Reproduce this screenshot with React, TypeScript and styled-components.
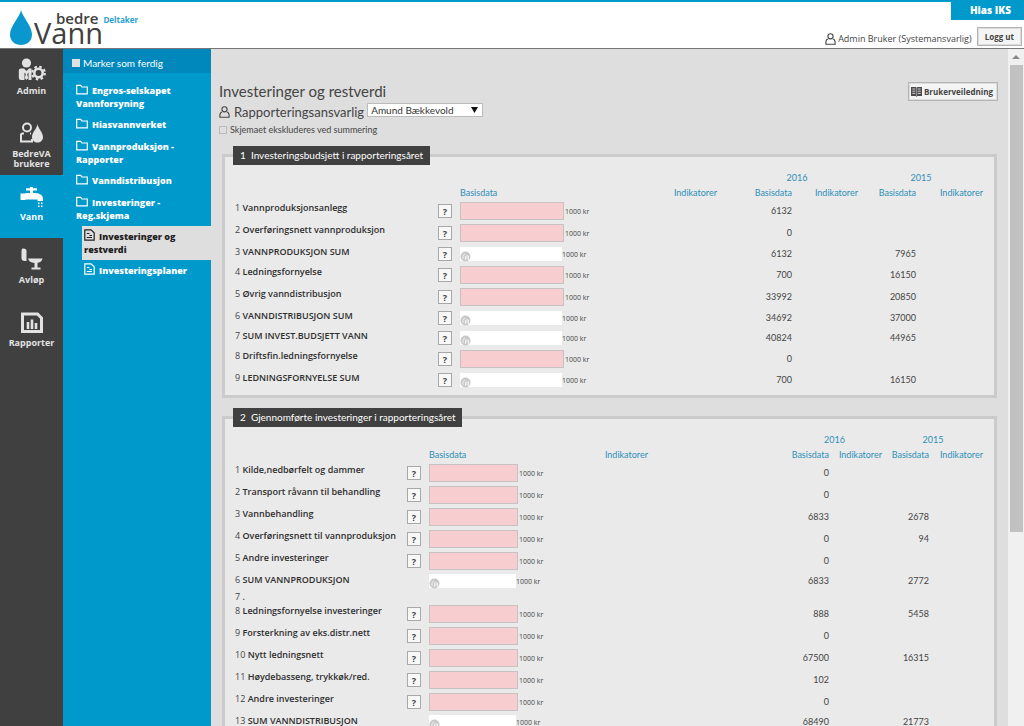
import React from "react";
import styled, { createGlobalStyle, css } from "styled-components";

const blue = "#0099cc";
const dark = "#404040";
const light = `Lato, "Open Sans", sans-serif`;

const GlobalStyle = createGlobalStyle`
  * { box-sizing: border-box; }
  body {
    margin: 0;
    font-family: "Open Sans", "Noto Sans", sans-serif;
    font-size: 9px;
    color: #444;
    background: #dedede;
  }
  button, input, select { font-family: inherit; color: inherit; margin: 0; }
`;

const Page = styled.div`
  display: flex;
  flex-direction: column;
  height: 100vh;
`;

const Header = styled.header`
  flex: none;
  display: flex;
  justify-content: space-between;
  height: 49px;
  background: #fff;
  border-top: 2px solid ${blue};
  border-bottom: 1px solid #777;
`;

const Brand = styled.a`
  display: flex;
  align-items: flex-start;
  padding: 7px 0 0 9px;
  color: ${dark};
  text-decoration: none;
`;

const Wordmark = styled.span`
  display: flex;
  flex-direction: column;
  margin-left: 1px;
`;

const WordTop = styled.span`
  display: flex;
  align-items: center;
  gap: 5px;
  padding-left: 22px;
  font-size: 15px;
  font-weight: 600;
  line-height: 16px;
`;

const WordBottom = styled.span`
  margin-top: -4px;
  font-size: 29px;
  line-height: 21px;
`;

const Role = styled.span`
  font-size: 8px;
  font-weight: 700;
  line-height: 12px;
  padding-top: 5px;
  color: #2a9fd0;
`;

const Account = styled.div`
  display: flex;
  flex-direction: column;
  align-items: flex-end;
`;

const Company = styled.div`
  margin-top: -2px;
  padding: 0 13px 0 19px;
  font-size: 10px;
  font-weight: 800;
  line-height: 20px;
  color: #fff;
  background: ${blue};
`;

const UserRow = styled.div`
  display: flex;
  align-items: center;
  padding: 7px 2px 0 0;
  font-size: 9px;
  line-height: 12px;
`;

const UserName = styled.span`
  display: flex;
  align-items: center;
  gap: 2px;
  padding-top: 4px;
`;

const PlainButton = styled.button`
  display: flex;
  align-items: center;
  justify-content: center;
  gap: 2px;
  height: 19px;
  padding: 0 4px 0 2px;
  font-size: 8px;
  font-weight: 700;
  line-height: 16px;
  background: #f4f4f4;
  border: 1px solid #b4b4b4;
  box-shadow: inset 0 0 0 1px #dcdcdc;
`;

const LogoutButton = styled(PlainButton)`
  margin-left: 5px;
  padding: 0 7px;
`;

const Body = styled.div`
  flex: 1;
  display: flex;
  min-height: 0;
`;

const MainNav = styled.nav`
  flex: none;
  width: 63px;
  background: ${dark};
`;

const NavItem = styled.a<{ $active?: boolean }>`
  display: flex;
  flex-direction: column;
  align-items: center;
  height: 63px;
  padding-top: 9px;
  font-size: 9px;
  font-weight: 700;
  line-height: 10px;
  text-align: center;
  text-decoration: none;
  color: ${(p) => (p.$active ? "#fff" : "#e2e2e2")};
  background: ${(p) => (p.$active ? blue : "transparent")};
  svg { display: block; margin-bottom: 4px; }
`;

const SubNav = styled.nav`
  flex: none;
  width: 148px;
  background: ${blue};
  color: #fff;
`;

const MarkDone = styled.label`
  display: flex;
  align-items: center;
  gap: 3px;
  height: 24px;
  padding: 4px 0 0 9px;
  font-family: ${light};
  font-size: 10px;
  line-height: 14px;
  background: #0088bd;
`;

const Tick = styled.input<{ $filled?: boolean }>`
  appearance: none;
  width: 8px;
  height: 8px;
  background: ${(p) => (p.$filled ? "#e0e0e0" : "transparent")};
  border: 1px solid ${(p) => (p.$filled ? "#e0e0e0" : "#bbb")};
`;

const FolderList = styled.ul`
  display: flex;
  flex-direction: column;
  gap: 8px;
  margin: 0;
  padding: 11px 0 0 13px;
  list-style: none;
`;

const FolderItem = styled.li`
  min-height: 14px;
`;

const menuText = css`
  display: block;
  font-size: 9px;
  font-weight: 800;
  line-height: 13px;
  text-decoration: none;
  svg { margin-right: 4px; vertical-align: -1px; }
`;

const FolderLink = styled.a`
  ${menuText}
  color: #fff;
`;

const FormList = styled.ul`
  display: flex;
  flex-direction: column;
  margin: 4px 0 0 6px;
  padding: 0;
  list-style: none;
`;

const FormLink = styled.a<{ $active?: boolean }>`
  ${menuText}
  padding: 3px 3px 4px 2px;
  color: ${(p) => (p.$active ? "#222" : "#fff")};
  background: ${(p) => (p.$active ? "#dedede" : "transparent")};
`;

const Content = styled.main`
  flex: 1;
  min-width: 0;
  padding: 33px 10px 0 8px;
  overflow: auto;
  scrollbar-width: none;
`;

const TitleRow = styled.div`
  display: flex;
  justify-content: space-between;
  height: 21px;
`;

const Title = styled.h1`
  margin: 0;
  font-family: ${light};
  font-size: 15px;
  font-weight: 400;
  line-height: 18px;
`;

const Responsible = styled.div`
  display: flex;
  align-items: flex-start;
  height: 20px;
  font-family: ${light};
  font-size: 13px;
  line-height: 18px;
  label { display: flex; align-items: center; gap: 4px; }
`;

const SelectWrap = styled.span`
  position: relative;
  display: block;
  margin-left: 3px;
`;

const Select = styled.select`
  display: block;
  appearance: none;
  width: 116px;
  height: 14px;
  padding: 0 16px 0 3px;
  font-size: 10px;
  line-height: 12px;
  color: #333;
  background: #fff;
  border: 1px solid #bbb;
  border-radius: 0;
`;

const SelectArrow = styled.svg`
  position: absolute;
  top: 4px;
  right: 5px;
  pointer-events: none;
`;

const Exclude = styled.label`
  display: flex;
  align-items: center;
  gap: 3px;
  height: 14px;
  margin-bottom: 9px;
  font-family: ${light};
  font-size: 9px;
  line-height: 14px;
`;

const Panel = styled.fieldset`
  min-width: 0;
  margin: 0 1px 10px 3px;
  padding: 5px 10px 5px;
  background: #eaeaea;
  border: 3px solid #cbcbcb;
`;

const PanelTitle = styled.legend`
  height: 19px;
  margin-left: -2px;
  padding: 0 7px;
  font-family: ${light};
  font-size: 10px;
  line-height: 19px;
  white-space: pre;
  color: #fff;
  background: ${dark};
`;

const Grid = styled.table`
  width: 100%;
  table-layout: fixed;
  border-collapse: collapse;
  td, th { padding: 0; }
`;

const HeadCell = styled.th<{ $align?: string; $inset?: number }>`
  height: 15px;
  font-family: ${light};
  font-size: 9px;
  font-weight: 400;
  line-height: 15px;
  color: #2f8fb8;
  text-align: ${(p) => p.$align ?? "right"};
  && { padding-right: ${(p) => p.$inset ?? 0}px; }
`;

const Row = styled.tr<{ $height: number }>`
  height: ${(p) => p.$height}px;
`;

const NameCell = styled.th<{ $line: number }>`
  font-size: 9px;
  font-weight: 400;
  line-height: ${(p) => p.$line}px;
  text-align: left;
  vertical-align: top;
  white-space: nowrap;
`;

const NameLabel = styled.label`
  font-weight: 600;
  color: #2e2e2e;
`;

const ValueCell = styled.td`
  font-family: ${light};
  font-size: 9px;
  line-height: 12px;
  text-align: right;
`;

const Field = styled.div`
  display: flex;
  align-items: center;
  gap: 1px;
  font-size: 7px;
  line-height: 12px;
  white-space: nowrap;
`;

const ReadField = styled(Field)`
  position: relative;
  gap: 0;
`;

const Unit = styled.span`
  padding-top: 1px;
`;

const AmountInput = styled.input<{ $width: number }>`
  flex: none;
  width: ${(p) => p.$width}px;
  height: 18px;
  padding: 0 3px;
  font-size: 9px;
  background: #f8cdd0;
  border: 1px solid #c6c2c3;
`;

const SumInput = styled.input<{ $width: number }>`
  flex: none;
  width: ${(p) => p.$width}px;
  height: 14px;
  padding: 0 3px 0 14px;
  font-size: 9px;
  background: #fff;
  border: 0;
`;

const SumMark = styled.svg`
  position: absolute;
  left: 0;
  bottom: -1px;
`;

const HelpButton = styled.button`
  display: block;
  width: 14px;
  height: 14px;
  padding: 0;
  font-size: 9px;
  font-weight: 700;
  line-height: 11px;
  text-align: center;
  background: #f8f8f8;
  border: 1px solid #a8a8a8;
`;

const ScrollTrack = styled.div`
  flex: none;
  display: flex;
  flex-direction: column;
  align-items: center;
  width: 16px;
  background: #f0f0f0;
`;

const ScrollUp = styled.div`
  display: flex;
  align-items: center;
  justify-content: center;
  height: 16px;
`;

const ScrollThumb = styled.div`
  width: 13px;
  height: 69%;
  background: #c1c1c1;
`;

const DropLogo = () => (
  <svg width="24" height="37" viewBox="0 0 24 37" aria-hidden="true">
    <path d="M12 1C11 8 1 17 1 25.500C1 32 6 36 12 36C18 36 23 32 23 25.500C23 17 13.500 8 12 1Z" fill="#0a97cd" />
  </svg>
);

const PersonIcon = () => (
  <svg width="11" height="12" viewBox="0 0 11 12" fill="none" stroke="currentColor" strokeWidth="1.100" aria-hidden="true">
    <circle cx="5.500" cy="3.300" r="2.600" />
    <path d="M3.200 6.300H2L.9 8.500V11.200H10.100V8.500L9 6.300H7.800" />
  </svg>
);

const BookIcon = () => (
  <svg width="11" height="11" viewBox="0 0 11 11" aria-hidden="true">
    <path d="M0 1H4.500L5.500 1.700L6.500 1H11V10H6.500L5.500 10.700L4.500 10H0Z" fill="#4a4a4a" />
    <path d="M1.300 3H4.300M1.300 5.200H4.300M1.300 7.400H4.300M6.700 3H9.700M6.700 5.200H9.700M6.700 7.400H9.700" stroke="#ddd" strokeWidth=".9" />
    <path d="M5.500 2V10" stroke="#bbb" strokeWidth=".6" />
  </svg>
);

const FolderIcon = () => (
  <svg width="12" height="11" viewBox="0 0 12 11" fill="none" stroke="currentColor" strokeWidth="1.200" aria-hidden="true">
    <path d="M.7 9.800V1.300H4.700L6 3H11.300V9.800Z" />
  </svg>
);

const FormIcon = () => (
  <svg width="11" height="12" viewBox="0 0 11 12" fill="none" stroke="currentColor" strokeWidth="1.200" aria-hidden="true">
    <path d="M.8 .8H7L10.200 3.800V11.200H.8ZM2.800 4.500H5.500M2.800 8.500H8M5.500 6.500H8" />
  </svg>
);

const AdminIcon = () => (
  <svg width="28" height="24" viewBox="0 0 28 24" aria-hidden="true">
    <circle cx="8.500" cy="5" r="4.600" fill="currentColor" />
    <path d="M3 10.500H6L8.500 13L11 10.500H13.500V22H10.500V14.500L8.500 17L6.500 14.500V22H3Q.8 22 .8 19.800V12.700Q.8 10.500 3 10.500Z" fill="currentColor" />
    <path d="M8.500 14L10.300 20L8.500 22L6.700 20Z" fill="currentColor" />
    <circle cx="20.500" cy="15" r="4.200" fill="none" stroke="currentColor" strokeWidth="2.600" />
    <circle cx="20.500" cy="15" r="6.300" fill="none" stroke="currentColor" strokeWidth="2.200" strokeDasharray="2.500 2.448" />
  </svg>
);

const UsersIcon = () => (
  <svg width="26" height="24" viewBox="0 0 26 24" aria-hidden="true">
    <g fill="none" stroke="currentColor" strokeWidth="2">
      <circle cx="8" cy="6.500" r="4" />
      <path d="M5 12.500H3.500Q2 12.500 2 14V20.500H13V18" />
      <path d="M11 12.500H12" />
    </g>
    <path d="M18.500 3C18 7.500 13 11.500 13 16C13 19.500 15.500 21.500 18.500 21.500C21.500 21.500 24 19.500 24 16C24 11.500 19.200 7.500 18.500 3Z" fill="currentColor" />
  </svg>
);

const TapIcon = () => (
  <svg width="26" height="24" viewBox="0 0 26 24" fill="currentColor" aria-hidden="true">
    <path d="M7 4.200H11V3H14V4.200H18V6.500H14V9H15Q23.500 9 24 14.500V17H18.500V15.500H6.500V16H1.500V9.500H6.500V9H11V6.500H7Z" />
    <path d="M19 18.500H20.500V20H19ZM22 18.500H23.500V20H22ZM19 21.500H20.500V23H19ZM22 21.500H23.500V23H22Z" />
  </svg>
);

const ToiletIcon = () => (
  <svg width="24" height="24" viewBox="0 0 24 24" fill="currentColor" aria-hidden="true">
    <path d="M2.500 1.500Q6.500 1 6.500 4V14H4.500Q1.500 14 1.500 11V4Q1.500 2 2.500 1.500Z" />
    <path d="M8 11.500H22.500Q22 15 17.500 16V20.500H20.500V22.500H11.500V20.500H14.500V16Q9 15.500 8 11.500Z" />
  </svg>
);

const ReportIcon = () => (
  <svg width="24" height="24" viewBox="0 0 24 24" fill="none" stroke="currentColor" aria-hidden="true">
    <path d="M2.500 4H17.500L21.500 8V21.500H2.500Z" strokeWidth="3" />
    <path d="M8 12V19M12 9.500V19M16 13V19" strokeWidth="2.600" />
  </svg>
);

const SigmaMark = () => (
  <SumMark width="11" height="11" viewBox="0 0 11 11" aria-hidden="true">
    <circle cx="5.500" cy="5.500" r="5" fill="#c9c9c9" />
    <path d="M3 8V4.500L5 3M5.500 9V5H8.500V9M5.500 7H8.500" fill="none" stroke="#efefef" />
  </SumMark>
);

type Line = {
  name: string;
  kind: "input" | "sum" | "blank";
  help?: boolean;
  a?: number;
  b?: number;
};

const budget: Line[] = [
  { name: "Vannproduksjonsanlegg", kind: "input", help: true, a: 6132 },
  { name: "Overføringsnett vannproduksjon", kind: "input", help: true, a: 0 },
  { name: "VANNPRODUKSJON SUM", kind: "sum", help: true, a: 6132, b: 7965 },
  { name: "Ledningsfornyelse", kind: "input", help: true, a: 700, b: 16150 },
  { name: "Øvrig vanndistribusjon", kind: "input", help: true, a: 33992, b: 20850 },
  { name: "VANNDISTRIBUSJON SUM", kind: "sum", help: true, a: 34692, b: 37000 },
  { name: "SUM INVEST.BUDSJETT VANN", kind: "sum", help: true, a: 40824, b: 44965 },
  { name: "Driftsfin.ledningsfornyelse", kind: "input", help: true, a: 0 },
  { name: "LEDNINGSFORNYELSE SUM", kind: "sum", help: true, a: 700, b: 16150 },
];

const completed: Line[] = [
  { name: "Kilde,nedbørfelt og dammer", kind: "input", help: true, a: 0 },
  { name: "Transport råvann til behandling", kind: "input", help: true, a: 0 },
  { name: "Vannbehandling", kind: "input", help: true, a: 6833, b: 2678 },
  { name: "Overføringsnett til vannproduksjon", kind: "input", help: true, a: 0, b: 94 },
  { name: "Andre investeringer", kind: "input", help: true, a: 0 },
  { name: "SUM VANNPRODUKSJON", kind: "sum", a: 6833, b: 2772 },
  { name: ".", kind: "blank" },
  { name: "Ledningsfornyelse investeringer", kind: "input", help: true, a: 888, b: 5458 },
  { name: "Forsterkning av eks.distr.nett", kind: "input", help: true, a: 0 },
  { name: "Nytt ledningsnett", kind: "input", help: true, a: 67500, b: 16315 },
  { name: "Høydebasseng, trykkøk/red.", kind: "input", help: true, a: 102 },
  { name: "Andre investeringer", kind: "input", help: true, a: 0 },
  { name: "SUM VANNDISTRIBUSJON", kind: "sum", a: 68490, b: 21773 },
];

const rowHeight = (l: Line) =>
  l.kind === "input" ? 22 : l.kind === "blank" ? 13 : l.help ? 20 : 18;

type SectionProps = {
  id: string;
  title: string;
  lines: Line[];
  columns: (number | undefined)[];
  inset: number;
  fieldWidth: number;
};

const Section = ({ id, title, lines, columns, inset, fieldWidth }: SectionProps) => (
  <Panel>
    <PanelTitle>{title}</PanelTitle>
    <Grid>
      <colgroup>
        {columns.map((w, i) => (
          <col key={i} width={w} />
        ))}
      </colgroup>
      <thead>
        <tr>
          <td colSpan={4} />
          <HeadCell colSpan={2} $align="center">2016</HeadCell>
          <HeadCell colSpan={2} $align="center">2015</HeadCell>
        </tr>
        <tr>
          <td colSpan={2} />
          <HeadCell $align="left">Basisdata</HeadCell>
          <HeadCell $inset={inset}>Indikatorer</HeadCell>
          <HeadCell>Basisdata</HeadCell>
          <HeadCell>Indikatorer</HeadCell>
          <HeadCell>Basisdata</HeadCell>
          <HeadCell $inset={1}>Indikatorer</HeadCell>
        </tr>
      </thead>
      <tbody>
        {lines.map((l, i) => {
          const fieldId = `${id}-${i + 1}`;
          return (
            <Row key={fieldId} $height={rowHeight(l)}>
              <NameCell scope="row" $line={l.kind === "blank" ? 13 : 16}>
                {i + 1} <NameLabel htmlFor={fieldId}>{l.name}</NameLabel>
              </NameCell>
              <td>{l.help && <HelpButton type="button">?</HelpButton>}</td>
              <td>
                {l.kind === "input" && (
                  <Field>
                    <AmountInput id={fieldId} type="text" $width={fieldWidth} />
                    <Unit>1000 kr</Unit>
                  </Field>
                )}
                {l.kind === "sum" && (
                  <ReadField>
                    <SumInput id={fieldId} type="text" readOnly $width={fieldWidth - 2} />
                    <SigmaMark />
                    <Unit>1000 kr</Unit>
                  </ReadField>
                )}
              </td>
              <td />
              <ValueCell>{l.a}</ValueCell>
              <td />
              <ValueCell>{l.b}</ValueCell>
              <td />
            </Row>
          );
        })}
      </tbody>
    </Grid>
  </Panel>
);

const folders = [
  "Engros-selskapet Vannforsyning",
  "Hiasvannverket",
  "Vannproduksjon - Rapporter",
  "Vanndistribusjon",
];

export default function App() {
  return (
    <Page>
      <GlobalStyle />
      <Header>
        <Brand href="#">
          <DropLogo />
          <Wordmark>
            <WordTop>
              bedre <Role>Deltaker</Role>
            </WordTop>
            <WordBottom>Vann</WordBottom>
          </Wordmark>
        </Brand>
        <Account>
          <Company>Hias IKS</Company>
          <UserRow>
            <UserName><PersonIcon />Admin Bruker (Systemansvarlig)</UserName>
            <LogoutButton type="button">Logg ut</LogoutButton>
          </UserRow>
        </Account>
      </Header>
      <Body>
        <MainNav>
          <NavItem href="#"><AdminIcon />Admin</NavItem>
          <NavItem href="#"><UsersIcon />BedreVA<br />brukere</NavItem>
          <NavItem href="#" $active><TapIcon />Vann</NavItem>
          <NavItem href="#"><ToiletIcon />Avløp</NavItem>
          <NavItem href="#"><ReportIcon />Rapporter</NavItem>
        </MainNav>
        <SubNav>
          <MarkDone>
            <Tick type="checkbox" $filled />
            Marker som ferdig
          </MarkDone>
          <FolderList>
            {folders.map((f) => (
              <FolderItem key={f}>
                <FolderLink href="#"><FolderIcon />{f}</FolderLink>
              </FolderItem>
            ))}
            <FolderItem>
              <FolderLink href="#"><FolderIcon />Investeringer -<br />Reg.skjema</FolderLink>
              <FormList>
                <li><FormLink href="#" $active><FormIcon />Investeringer og<br />restverdi</FormLink></li>
                <li><FormLink href="#"><FormIcon />Investeringsplaner</FormLink></li>
              </FormList>
            </FolderItem>
          </FolderList>
        </SubNav>
        <Content>
          <TitleRow>
            <Title>Investeringer og restverdi</Title>
            <PlainButton type="button"><BookIcon />Brukerveiledning</PlainButton>
          </TitleRow>
          <Responsible>
            <label htmlFor="responsible"><PersonIcon />Rapporteringsansvarlig</label>
            <SelectWrap>
              <Select id="responsible">
                <option>Amund Bækkevold</option>
              </Select>
              <SelectArrow width="7" height="6" viewBox="0 0 7 6" aria-hidden="true">
                <path d="M0 0H7L3.500 6Z" fill="#111" />
              </SelectArrow>
            </SelectWrap>
          </Responsible>
          <Exclude>
            <Tick type="checkbox" />
            Skjemaet ekskluderes ved summering
          </Exclude>
          <Section
            id="budget"
            title="1  Investeringsbudsjett i rapporteringsåret"
            lines={budget}
            columns={[203, 22, undefined, 147, 56, 66, 58, 68]}
            inset={19}
            fieldWidth={104}
          />
          <Section
            id="completed"
            title="2  Gjennomførte investeringer i rapporteringsåret"
            lines={completed}
            columns={[172, 22, undefined, 220, 42, 53, 47, 55]}
            inset={139}
            fieldWidth={89}
          />
        </Content>
        <ScrollTrack>
          <ScrollUp>
            <svg width="8" height="4" viewBox="0 0 8 4" aria-hidden="true">
              <path d="M0 4L4 0L8 4Z" fill="#888" />
            </svg>
          </ScrollUp>
          <ScrollThumb />
        </ScrollTrack>
      </Body>
    </Page>
  );
}
